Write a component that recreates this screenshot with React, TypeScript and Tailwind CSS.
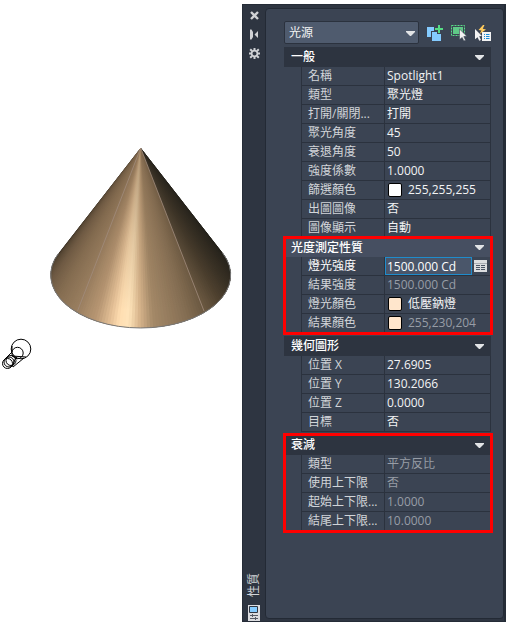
import type { ReactNode } from "react";

type Row = {
  label: string;
  value: string;
  swatch?: "white" | "peach";
  muted?: boolean;
  active?: boolean;
};

type SectionData = {
  title: string;
  rows: Row[];
  tone?: "dark" | "light";
  marked?: boolean;
};

const sections: SectionData[] = [
  {
    title: "一般",
    rows: [
      { label: "名稱", value: "Spotlight1" },
      { label: "類型", value: "聚光燈" },
      { label: "打開/關閉...", value: "打開" },
      { label: "聚光角度", value: "45" },
      { label: "衰退角度", value: "50" },
      { label: "強度係數", value: "1.0000" },
      { label: "篩選顏色", value: "255,255,255", swatch: "white" },
      { label: "出圖圖像", value: "否" },
      { label: "圖像顯示", value: "自動" },
    ],
  },
  {
    title: "光度測定性質",
    tone: "light",
    marked: true,
    rows: [
      { label: "燈光強度", value: "1500.000 Cd", active: true },
      { label: "結果強度", value: "1500.000 Cd", muted: true },
      { label: "燈光顏色", value: "低壓鈉燈", swatch: "peach" },
      { label: "結果顏色", value: "255,230,204", swatch: "peach", muted: true },
    ],
  },
  {
    title: "幾何圖形",
    rows: [
      { label: "位置 X", value: "27.6905" },
      { label: "位置 Y", value: "130.2066" },
      { label: "位置 Z", value: "0.0000" },
      { label: "目標", value: "否" },
    ],
  },
  {
    title: "衰減",
    marked: true,
    rows: [
      { label: "類型", value: "平方反比", muted: true },
      { label: "使用上下限", value: "否", muted: true },
      { label: "起始上下限...", value: "1.0000", muted: true },
      { label: "結尾上下限...", value: "10.0000", muted: true },
    ],
  },
];

// Surface colour of the cone by angle around its base, left silhouette to right.
const stops: [number, number, number, number][] = [
  [204, 38, 32, 24],
  [192, 76, 62, 46],
  [175, 108, 88, 66],
  [155, 134, 110, 82],
  [135, 154, 127, 96],
  [120, 184, 151, 115],
  [110, 228, 192, 150],
  [104, 255, 222, 178],
  [98, 255, 228, 186],
  [91, 216, 181, 140],
  [82, 164, 137, 104],
  [60, 134, 111, 84],
  [42, 102, 84, 62],
  [30, 80, 66, 48],
  [15, 60, 51, 38],
  [0, 46, 40, 31],
  [-24, 30, 28, 23],
];

function shade(angle: number) {
  for (let i = 0; i < stops.length - 1; i++) {
    const a = stops[i];
    const b = stops[i + 1];
    if (angle <= a[0] && angle >= b[0]) {
      const k = (a[0] - angle) / (a[0] - b[0]);
      const mix = (n: number) => Math.round(a[n] + (b[n] - a[n]) * k);
      return `rgb(${mix(1)},${mix(2)},${mix(3)})`;
    }
  }
  return "rgb(30,28,23)";
}

function basePoint(angle: number) {
  const t = (angle * Math.PI) / 180;
  return `${(140.7 + 90 * Math.cos(t)).toFixed(2)},${(275 + 53 * Math.sin(t)).toFixed(2)}`;
}

function Model() {
  const slices: ReactNode[] = [];
  for (let a = 204; a > -24; a -= 2) {
    slices.push(
      <polygon
        key={a}
        points={`140.7,148 ${basePoint(a)} ${basePoint(Math.max(a - 4, -24))} ${basePoint(Math.max(a - 8, -24))}`}
        fill={shade(a - 1)}
      />,
    );
  }
  return (
    <svg width="242" height="380" viewBox="0 0 242 380" role="img" aria-label="Cone" className="block">
      <defs>
        <linearGradient id="fade" x1="0" y1="148" x2="0" y2="328" gradientUnits="userSpaceOnUse">
          <stop offset="0" stopColor="#7a6248" stopOpacity="0.6" />
          <stop offset="0.5" stopColor="#7a6248" stopOpacity="0.22" />
          <stop offset="0.9" stopColor="#7a6248" stopOpacity="0" />
        </linearGradient>
        <linearGradient id="dusk" x1="0" y1="148" x2="0" y2="300" gradientUnits="userSpaceOnUse">
          <stop offset="0" stopColor="#2a261e" stopOpacity="0.8" />
          <stop offset="0.4" stopColor="#2a261e" stopOpacity="0.5" />
          <stop offset="1" stopColor="#2a261e" stopOpacity="0" />
        </linearGradient>
      </defs>
      {slices}
      <path d="M140.7 148 L58.8 253 A90 53 0 0 0 204 311 Z" fill="url(#fade)" />
      <path d="M140.7 148 L204 311 A90 53 0 0 0 222.6 253 Z" fill="url(#dusk)" />
      <path d="M58.8 253 A90 53 0 1 0 222.6 253" fill="none" stroke="#777" strokeWidth="1" />
      <path d="M140.7 148 L77.5 311 M140.7 148 L204 311" fill="none" stroke="#a18b7c" strokeWidth="0.8" />
      <g fill="none" stroke="#000" strokeWidth="1">
        <circle cx="21" cy="349" r="9.8" />
        <circle cx="17.5" cy="353" r="5.7" />
        <circle cx="11" cy="360.5" r="5" />
        <circle cx="9" cy="362" r="5" />
        <circle cx="7.5" cy="363.5" r="5" />
        <path d="M12 346 V352 L4 360 M16 357 L12 367 M24 358 L13 367 M12 356 L26 357" />
      </g>
    </svg>
  );
}

function Arrow() {
  return (
    <svg width="9" height="5" viewBox="0 0 9 5" className="block" aria-hidden="true">
      <path d="M0 0 H9 V1 L5 5 H4 L0 1 Z" fill="#e2e4e6" />
    </svg>
  );
}

function Swatch({ kind }: { kind: "white" | "peach" }) {
  return (
    <span
      className={
        kind === "white"
          ? "ml-px mr-1.5 h-3.5 w-3.5 shrink-0 rounded-xs border border-black bg-white"
          : "ml-px mr-1.5 h-3.5 w-3.5 shrink-0 rounded-xs border border-black bg-[#ffe6cc]"
      }
    />
  );
}

function Section({ data }: { data: SectionData }) {
  const light = data.tone === "light";
  return (
    <section className="relative">
      <button
        type="button"
        className={
          light
            ? "flex h-[19px] w-full items-center justify-between bg-[#464f61] pr-[7px] pl-[7px] text-white"
            : "flex h-5 w-full items-center justify-between bg-[#2d3440] pr-[7px] pl-[7px] text-white"
        }
      >
        <span className="font-medium">{data.title}</span>
        <Arrow />
      </button>
      <div className="pl-[17px]">
        <table className="w-full table-fixed border-separate border-spacing-0 border-l border-[#2b323e]">
          <tbody>
            {data.rows.map((row) => (
              <tr key={row.label} className="h-[19px]">
                <th
                  scope="row"
                  className={
                    row.active
                      ? "w-[83px] border-r border-b border-[#2b323e] p-0 pl-1.5 text-left leading-[18px] font-normal whitespace-nowrap text-white"
                      : "w-[83px] border-r border-b border-[#2b323e] p-0 pl-1.5 text-left leading-[18px] font-normal whitespace-nowrap text-[#d2d5d9]"
                  }
                >
                  {row.label}
                </th>
                <td
                  className={
                    row.muted
                      ? "border-r border-b border-[#2b323e] p-0 text-[#979da6]"
                      : "border-r border-b border-[#2b323e] p-0 text-[#f2f3f4]"
                  }
                >
                  {row.active ? (
                    <div className="flex h-[18px] items-center justify-between pr-[3px]">
                      <input
                        type="text"
                        aria-label={row.label}
                        defaultValue={row.value}
                        className="h-[18px] w-[87px] border border-[#1f8ccc] bg-[#4a566a] pl-px leading-4 text-white outline-none"
                      />
                      <button type="button" aria-label="…" className="block">
                        <svg width="13" height="12" viewBox="0 0 13 12" className="block">
                          <path d="M0 0 H13 V12 H0 Z" fill="#dcdddf" />
                          <path d="M0 3.5 H13" stroke="#a9adb3" strokeWidth="1" />
                          <path d="M2 5.5 H6 M7 5.5 H11 M2 7.5 H6 M7 7.5 H11 M2 9.5 H6 M7 9.5 H11" stroke="#4b5463" strokeWidth="1" />
                        </svg>
                      </button>
                    </div>
                  ) : (
                    <div className="flex h-[18px] items-center pl-0.5 leading-[18px] whitespace-nowrap">
                      {row.swatch && <Swatch kind={row.swatch} />}
                      {row.value}
                    </div>
                  )}
                </td>
              </tr>
            ))}
          </tbody>
        </table>
      </div>
      {data.marked && (
        <div className="pointer-events-none absolute -top-0.5 -right-0.5 -bottom-0.5 -left-px border-3 border-[#ff0000]" />
      )}
    </section>
  );
}

function Toolbar() {
  return (
    <div className="flex items-center">
      <label className="relative block">
        <select
          aria-label="Object type"
          className="block h-[23px] w-[135px] appearance-none rounded-xs border border-[#2b323e] bg-[#4f5b6e] pl-1 leading-5 text-[#f2f3f4] outline-none"
        >
          <option>光源</option>
        </select>
        <span className="pointer-events-none absolute top-2.5 right-1">
          <Arrow />
        </span>
      </label>
      <div className="ml-2 flex gap-2">
        <button type="button" aria-label="Toggle PICKADD">
          <svg width="16" height="16" viewBox="0 0 16 16" className="block">
            <path d="M0 2 H9 V12 H0 Z" fill="#84cbff" />
            <path d="M4 6 H15 V16 H4 Z" fill="#3b4453" />
            <path d="M5 7 H14 V16 H5 Z" fill="#84cbff" />
            <path d="M7 0 H16 V9 H7 Z" fill="#3b4453" />
            <path d="M5 7 H10 V9 H14 V10 H5 Z" fill="#84cbff" />
            <path d="M11 0 H13 V3 H16 V5 H13 V8 H11 V5 H8 V3 H11 Z" fill="#56dc84" />
          </svg>
        </button>
        <button type="button" aria-label="Select objects">
          <svg width="16" height="16" viewBox="0 0 16 16" className="block">
            <path d="M0.5 0.5 H13.5 V10.5 H0.5 Z" fill="none" stroke="#5ade88" strokeDasharray="2 1" />
            <path d="M2 2 H12 V9 H2 Z" fill="#5fc987" />
            <path d="M8.5 4 L15.8 11.2 L12.8 11.6 L14.6 15.2 L12.8 16 L11.2 12.5 L8.5 14.5 Z" fill="#f2f2f2" stroke="#3b4453" strokeWidth="0.6" />
          </svg>
        </button>
        <button type="button" aria-label="Quick select">
          <svg width="16" height="16" viewBox="0 0 16 16" className="block">
            <path d="M8 0 L3.5 5 L6.5 5.5 L4.5 9 L11 4.5 L7.8 3.8 L9.5 0 Z" fill="#ffcb5c" />
            <path d="M0 4 L7 11 L4.2 11.3 L6 15 L4.2 15.8 L2.6 12.2 L0 14.2 Z" fill="#f2f2f2" />
            <path d="M7 7 H16 V16 H7 Z" fill="#f2f2f2" />
            <path d="M9 9.5 H10 M11 9.5 H14.5 M9 11.5 H10 M11 11.5 H14.5 M9 13.5 H10 M11 13.5 H14.5" stroke="#168bd8" strokeWidth="1" />
          </svg>
        </button>
      </div>
    </div>
  );
}

function SideBar() {
  return (
    <div className="flex w-[22px] shrink-0 flex-col items-center justify-between pt-[5px]">
      <div className="flex flex-col items-center gap-2">
        <button type="button" aria-label="Close">
          <svg width="11" height="11" viewBox="0 0 11 11" className="block">
            <path d="M2 2 L9 9 M9 2 L2 9" stroke="#d0d2d5" strokeWidth="2.4" />
          </svg>
        </button>
        <button type="button" aria-label="Auto-hide">
          <svg width="11" height="11" viewBox="0 0 11 11" className="block">
            <path d="M1 0.5 H2.5 L4 3 V8 L2.5 10.5 H1 Z M9 2 V9 L5.5 5.5 Z" fill="#d0d2d5" />
          </svg>
        </button>
        <button type="button" aria-label="Settings">
          <svg width="11" height="11" viewBox="0 0 11 11" className="block">
            <circle cx="5.5" cy="5.5" r="2.9" fill="none" stroke="#d0d2d5" strokeWidth="1.7" />
            <path d="M5.5 0 V2 M5.5 9 V11 M0 5.5 H2 M9 5.5 H11 M1.2 1.2 L3 3 M8 8 L9.8 9.8 M9.8 1.2 L8 3 M3 8 L1.2 9.8" stroke="#d0d2d5" strokeWidth="2" />
          </svg>
        </button>
      </div>
      <div className="flex flex-col items-center gap-2">
        <span className="rotate-180 leading-4 text-[#d2d5d9] [text-orientation:sideways] [writing-mode:vertical-rl]">
          性質
        </span>
        <svg width="12" height="16" viewBox="0 0 12 16" className="block" aria-hidden="true">
          <path d="M0 0 H12 V16 H0 Z" fill="#dcdde0" />
          <path d="M1.5 1.5 H9.5 V7.5 H1.5 Z" fill="#84cbff" stroke="#2e3541" />
          <path d="M2 10.5 H10 M2 13.5 H10 M4.5 9 V12 M7.5 12 V15" stroke="#555b66" />
        </svg>
      </div>
    </div>
  );
}

export default function App() {
  return (
    <main className="flex min-h-screen bg-white font-['Open_Sans','Noto_Sans_CJK_TC',sans-serif] text-[12px]">
      <div className="min-w-0 flex-1 overflow-hidden">
        <Model />
      </div>
      <aside className="mt-1 mb-3 flex w-[264px] shrink-0 border border-r-2 border-[#252c37] bg-[#2e3541]">
        <SideBar />
        <div className="mt-[3px] mb-0.5 min-w-0 flex-1 rounded border border-[#232a35] bg-[#3b4453] pt-3 pr-3 pl-[18px]">
          <Toolbar />
          <div className="mt-[3px]">
            <Section data={sections[0]} />
            <Section data={sections[1]} />
          </div>
          <div className="mt-[3px] flex flex-col gap-[3px]">
            <Section data={sections[2]} />
            <Section data={sections[3]} />
          </div>
        </div>
      </aside>
    </main>
  );
}
